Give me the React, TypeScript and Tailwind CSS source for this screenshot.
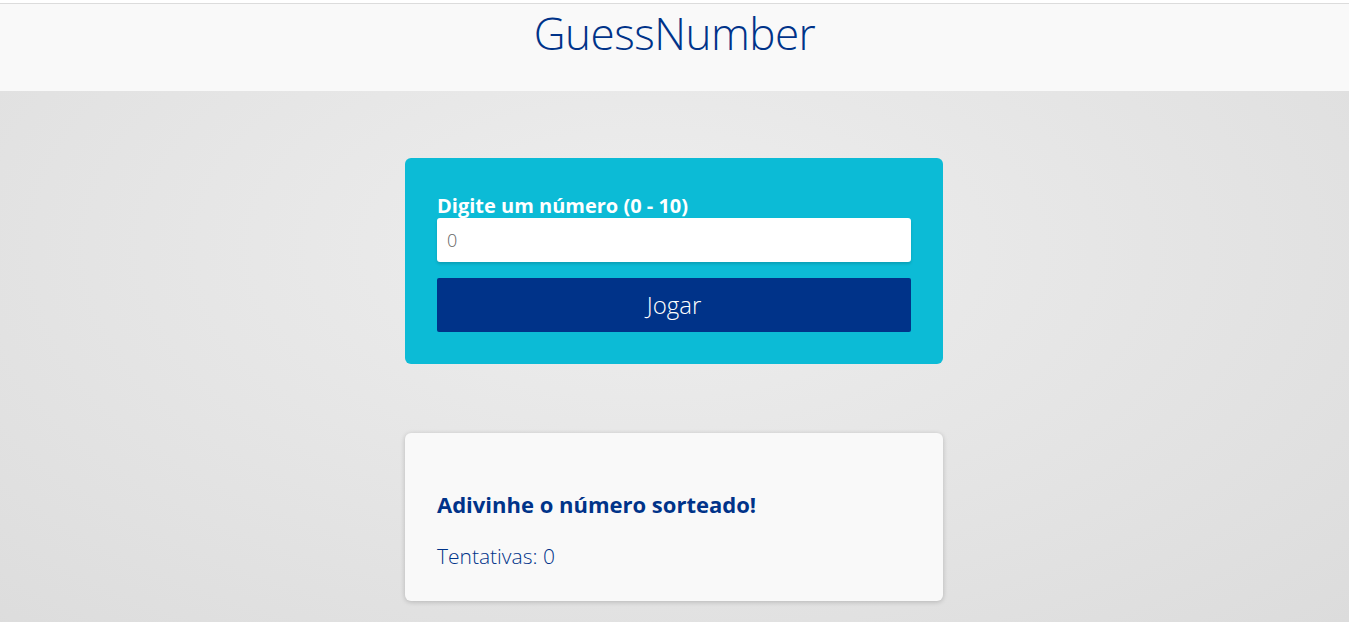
import React from "react";

export default function App() {
  const font = { fontFamily: '"Open Sans", "Noto Sans", sans-serif' };
  return (
    <div
      className="min-h-[622px] w-full flex flex-col"
      style={{
        ...font,
        background:
          "radial-gradient(ellipse at 48% 40%, #eeeeee 0%, #e6e6e6 45%, #dcdcdc 100%)",
      }}
    >
      <div className="h-[3px] bg-white" />
      <header className="h-[88px] bg-[#f9f9f9] border-t border-[#dcdcdc] flex justify-center">
        <h1 className="text-[#003389] text-[44px] font-light leading-none mt-[7px] tracking-[-0.5px]">
          GuessNumber
        </h1>
      </header>
      <main className="flex flex-col items-center pt-[67px] pr-[1px]">
        <div className="w-[538px] h-[206px] bg-[#0cbbd6] rounded-[6px] px-[32px] pt-[35px]">
          <label className="block text-white font-bold text-[20px] leading-[25px]">
            Digite um número (0 - 10)
          </label>
          <input
            className="block w-full h-[44px] bg-white rounded-[3px] px-[10px] text-[18px] font-light outline-none shadow-[0_2px_3px_rgba(0,0,0,0.15)] placeholder:text-[#666]"
            placeholder="0"
          />
          <button className="mt-[16px] w-full h-[54px] bg-[#003389] rounded-[2px] text-white text-[24px] font-light">
            Jogar
          </button>
        </div>
        <div className="mt-[69px] w-[538px] h-[168px] bg-[#f9f9f9] rounded-[6px] shadow-[0_1px_5px_rgba(0,0,0,0.2)] px-[32px] pt-[56px]">
          <h2 className="text-[#003389] font-bold text-[22px] leading-[30px]">
            Adivinhe o número sorteado!
          </h2>
          <p className="text-[#003389] font-light text-[21px] leading-[26px] mt-[24px]">
            Tentativas: 0
          </p>
        </div>
      </main>
    </div>
  );
}
